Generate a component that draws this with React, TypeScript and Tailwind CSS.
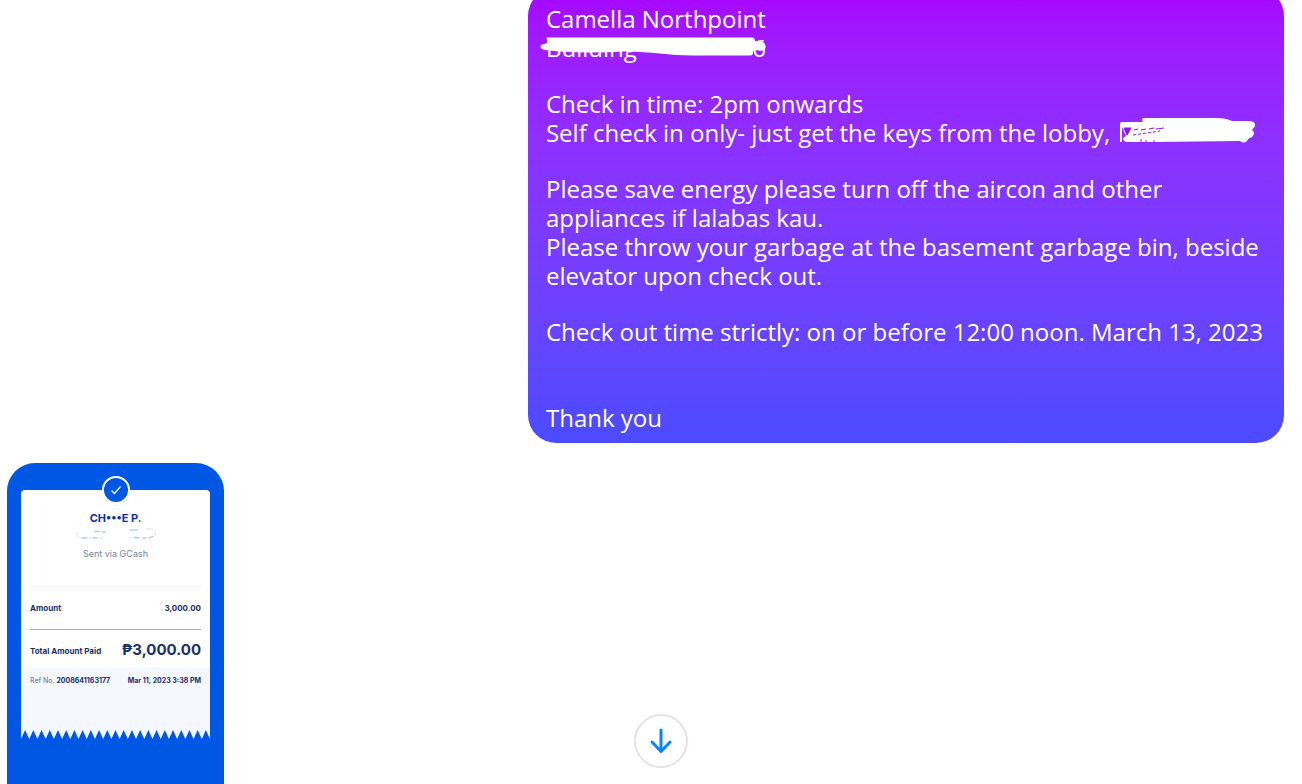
import React from 'react';

const messageGroups = [
  ['Check out time strictly: on or before 12:00 noon. March 13, 2023'],
];

const houseRules = [
  'Please save energy please turn off the aircon and other appliances if lalabas kau.',
  'Please throw your garbage at the basement garbage bin, beside elevator upon check out.',
];

const TEETH = 23;

const teethPath =
  'M0 0' +
  Array.from({ length: TEETH }, (_, i) => {
    const x = i * 10;
    return `L${x} 10L${x + 5} 1L${x + 10} 10`;
  }).join('') +
  `V0Z`;

const AddressScribble = () => (
  <svg
    className="absolute -left-1.5 top-0 h-[29px] w-[228px]"
    viewBox="0 0 228 29"
    fill="#fff"
    aria-hidden="true"
  >
    <path d="M7 6Q5 5 8 4.500H211Q215 4 215 8L223 9Q227 12 225 16Q222 19 216 17L213 18V21Q212 23 208 22.500H152C130 22.500 106 18 84 18.500C58 20 30 20 5 17Q-1 16 1 12L7 10Z" />
  </svg>
);

const KeyholderScribble = () => (
  <svg
    className="absolute left-0 top-0 h-[29px] w-[138px]"
    viewBox="0 0 138 29"
    aria-hidden="true"
  >
    <path
      d="M2 24V6Q2 4 4 4H25Q22 0 27 0H98Q108 0 114 3H130Q138 3 137 8L134 12Q138 15 134 19Q130 20 129 23Q126 26 122 23L34 24H10Q5 24 5 20L8 18L4 9V24Z"
      fill="#fff"
    />
    <path d="M6 10H13L9 17ZM16 12L20 11M23 12L28 11M31 11L36 10M38 11L46 10" fill="#8f12ff" stroke="#8f12ff" strokeWidth="1" />
    <path d="M15 17L42 13" stroke="#8f12ff" strokeWidth="1" strokeDasharray="3 2" />
    <path d="M23 24V21M28 24V22M36 24V22" stroke="#8f12ff" strokeWidth="1" />
  </svg>
);

const MessageBubble = () => (
  <div className="-mt-3 mr-[18px] w-[58.07%] self-end rounded-[28px] bg-linear-to-b from-[#a800ff] to-[#4b4bff] px-[18px] pb-[11px] pt-4 text-2xl leading-[29px] text-white">
    <div className="flex flex-col gap-[27px]">
      <div>
        <p>Camella Northpoint</p>
        <p className="relative flex w-[220px] justify-between">
          <span>Building</span>
          <span>6</span>
          <AddressScribble />
        </p>
      </div>
      <div>
        <p>Check in time: 2pm onwards</p>
        <p className="flex whitespace-nowrap">
          Self check in only- just get the keys from the lobby,
          <span className="relative ml-2 w-[138px]">
            <KeyholderScribble />
          </span>
        </p>
      </div>
      <div>
        {houseRules.map((rule) => (
          <p key={rule}>{rule}</p>
        ))}
      </div>
      {messageGroups.map(([line]) => (
        <p key={line}>{line}</p>
      ))}
    </div>
    <p className="mt-[57px]">Thank you</p>
  </div>
);

const Receipt = () => (
  <div className="ml-[7px] mt-5 flex-1 w-[217px] rounded-t-[28px] bg-[#0057e4] px-3.5 pt-[27px] font-['Inter',sans-serif] text-[#1b2f6b]">
    <div className="flex flex-col items-center rounded-t-sm bg-white">
      <div className="-mt-3.5 flex size-7 items-center justify-center rounded-full border-2 border-white bg-[#0057e4]">
        <svg className="size-3" viewBox="0 0 12 12" fill="none" stroke="#fff" strokeWidth="1.200" aria-hidden="true">
          <path d="M1.500 6.500L4.500 9.500L10.500 2.500" />
        </svg>
      </div>
      <p className="mt-2 text-[11px] font-bold leading-3 text-[#12309b]">CH•••E P.</p>
      <svg className="mt-1 h-3 w-20" viewBox="0 0 80 12" fill="none" aria-hidden="true">
        <path d="M2 4Q-1 9 5 10H27M52 10H76Q81 8 79 3Q76 0 70 1" stroke="#e9edf4" strokeWidth="1.500" />
        <path d="M18 4L24 3M25 4L30 4M54 2H62" stroke="#aab7cb" />
        <path d="M6 10H11M17 10H21M58 9L63 10M67 10H70M73 10L77 8" stroke="#a9bad1" />
      </svg>
      <p className="mt-2 text-[9px] leading-3 text-[#75839f]">Sent via GCash</p>
    </div>
    <div className="bg-white px-[9px] pt-[26px]">
      <div className="flex h-11 items-center justify-between border-y border-t-[#f0f2f5] border-b-[#a4a9bb] text-[8px] font-bold">
        <span>Amount</span>
        <span>3,000.00</span>
      </div>
      <div className="flex h-[37px] items-center justify-between pt-1">
        <span className="text-[8px] font-bold">Total Amount Paid</span>
        <span className="text-[15px] font-bold">₱3,000.00</span>
      </div>
    </div>
    <div className="flex h-[62px] justify-between bg-[#f5f8fe] px-[9px] pt-2 text-[7px] font-bold leading-3">
      <span>
        <span className="font-medium text-[#75839f]">Ref No.</span> 2008641163177
      </span>
      <span>Mar 11, 2023 3:38 PM</span>
    </div>
    <svg className="block h-2.5 w-full" viewBox="0 0 230 10" preserveAspectRatio="none" fill="#f5f8fe" aria-hidden="true">
      <path d={teethPath} />
    </svg>
  </div>
);

export default function App() {
  return (
    <main className="relative flex h-screen flex-col overflow-hidden bg-white font-['Open_Sans','Noto_Sans',sans-serif]">
      <MessageBubble />
      <Receipt />
      <div className="absolute inset-x-0 bottom-4 flex justify-center pl-5">
        <button
          type="button"
          aria-label="Scroll to latest message"
          className="flex size-[54px] items-center justify-center rounded-full border-2 border-[#e2e3e6] bg-white"
        >
          <svg className="size-7" viewBox="0 0 28 28" fill="none" stroke="#0a84ff" strokeWidth="3" strokeLinecap="round" strokeLinejoin="round" aria-hidden="true">
            <path d="M14 3V24M5 15L14 24.500L23 15" />
          </svg>
        </button>
      </div>
    </main>
  );
}
